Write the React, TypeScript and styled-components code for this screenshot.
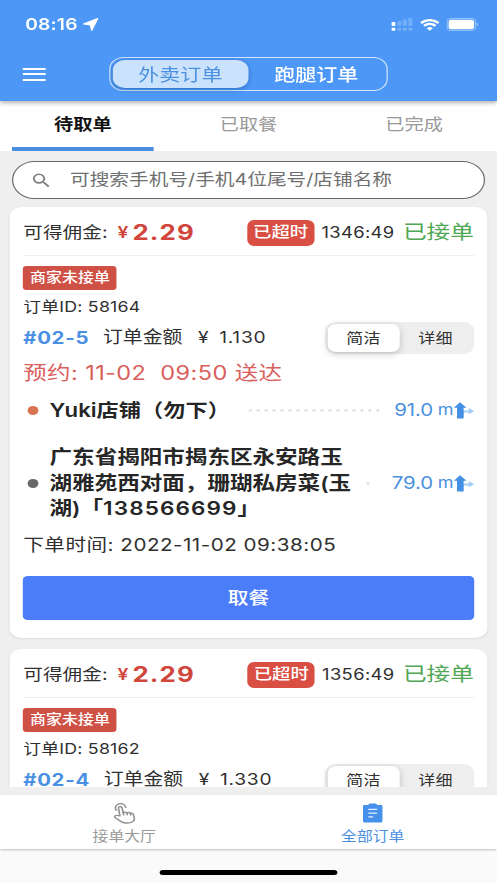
import React from 'react';
import styled, { createGlobalStyle } from 'styled-components';
import { MdSearch } from 'react-icons/md';

const GlobalStyle = createGlobalStyle`
  * { box-sizing: border-box; }
  body { margin: 0; overflow: hidden; background: #efefef; }
`;

const Viewport = styled.div`
  width: 497px;
  height: 883px;
  overflow: hidden;
`;

/* A 414pt wide phone layout, stretched to the width of the viewport. */
const Screen = styled.div`
  width: 414px;
  height: 883px;
  transform: scaleX(1.2005);
  transform-origin: 0 0;
  display: flex;
  flex-direction: column;
  background: #efefef;
  color: #303030;
  font-family: Inter, 'Noto Sans CJK SC', sans-serif;
`;

const Text = styled.span<{ $size: number; $color?: string; $weight?: number; $ls?: number; $ml?: number }>`
  font-size: ${p => p.$size}px;
  line-height: 1.2;
  color: ${p => p.$color ?? '#303030'};
  font-weight: ${p => p.$weight ?? 400};
  letter-spacing: ${p => p.$ls ?? 0}px;
  margin-left: ${p => p.$ml ?? 0}px;
  white-space: pre;
`;

const Header = styled.header`
  height: 101px;
  flex: none;
  background: #4d98f6;
  box-shadow: 0 2px 4px rgba(0, 0, 0, 0.3);
  position: relative;
  z-index: 1;
`;

const StatusBar = styled.div`
  height: 48px;
  padding: 1px 15px 0 21px;
  display: flex;
  align-items: center;
`;

const StatusIcons = styled.div`
  margin-left: auto;
  display: flex;
  align-items: center;
  gap: 6px;
`;

const NavBar = styled.div`
  height: 53px;
  padding-left: 19px;
  display: flex;
  align-items: center;
  padding-bottom: 1px;
`;

const MenuButton = styled.button`
  width: 22px;
  height: 13px;
  padding: 0;
  border: 0;
  background: none;
  display: flex;
  flex-direction: column;
  justify-content: space-between;
`;

const MenuLine = styled.span`
  width: 18.5px;
  height: 2px;
  background: #fff;
`;

const TypeSwitch = styled.div`
  width: 232.5px;
  height: 34px;
  margin-left: 49.5px;
  border: 1px solid #d3e6fd;
  border-radius: 12px;
  padding: 2px;
  display: flex;
`;

const TypeOption = styled.div<{ $active?: boolean }>`
  flex: ${p => (p.$active ? '0 0 113.5px' : '1')};
  display: flex;
  align-items: center;
  justify-content: center;
  border-radius: 10px;
  background: ${p => (p.$active ? '#cbe2fc' : 'transparent')};
  box-shadow: ${p => (p.$active ? '0 1px 5px rgba(0, 30, 90, .35)' : 'none')};
`;

const Tabs = styled.nav`
  height: 50px;
  flex: none;
  background: #fff;
  display: flex;
`;

const Tab = styled.div<{ $active?: boolean }>`
  flex: 1;
  margin: 0 10px;
  padding-top: 2px;
  display: flex;
  align-items: center;
  justify-content: center;
  border-bottom: 4px solid ${p => (p.$active ? '#4a8ee2' : 'transparent')};
`;

const List = styled.main`
  height: 636px;
  flex: none;
  overflow: hidden;
  padding: 10px 8.3px 0;
`;

const SearchBox = styled.div`
  height: 38px;
  margin: 0 2px 8px;
  border: 1px solid #6a6a6a;
  border-radius: 19px;
  background: #fff;
  display: flex;
  align-items: center;
  padding-left: 14px;
`;

const Card = styled.section`
  height: 431px;
  margin-bottom: 11px;
  padding: 0 11px;
  border-radius: 10px;
  background: #fff;
  box-shadow: 0 1px 2px rgba(0, 0, 0, 0.08);
`;

const Row = styled.div<{ $h: number }>`
  height: ${p => p.$h}px;
  display: flex;
  align-items: center;
`;

const CardHead = styled(Row)`
  padding-top: 3px;
  border-bottom: 1px solid #efefef;
`;

const IdRow = styled(Row)`
  padding-top: 3px;
`;

const ScheduleRow = styled(Row)`
  padding-top: 4px;
`;

const TimeRow = styled(Row)`
  margin-bottom: 21px;
`;

const Right = styled.div`
  margin-left: auto;
  display: flex;
  align-items: center;
`;

const Overdue = styled.span`
  width: 56px;
  height: 26px;
  border-radius: 6px;
  background: #da4f43;
  display: flex;
  align-items: center;
  justify-content: center;
  margin-right: 6px;
`;

const Timer = styled(Text)`
  padding-top: 2px;
`;

const ShopTag = styled.div`
  width: 78px;
  height: 24px;
  margin-top: 10px;
  border-radius: 3px;
  background: #cf5145;
  display: flex;
  align-items: center;
  justify-content: center;
`;

const ModeSwitch = styled.div`
  margin-left: auto;
  width: 124px;
  height: 32px;
  padding: 2px;
  border-radius: 9px;
  background: #eeeeee;
  display: flex;
`;

const Mode = styled.div<{ $active?: boolean }>`
  flex: 1;
  display: flex;
  align-items: center;
  justify-content: center;
  border-radius: 7px;
  background: ${p => (p.$active ? '#fff' : 'transparent')};
  box-shadow: ${p => (p.$active ? '0 2px 7px rgba(0, 0, 0, .2)' : 'none')};
`;

const Dot = styled.span<{ $color: string }>`
  width: 9px;
  height: 9px;
  margin: 0 9px 0 4px;
  border-radius: 50%;
  background: ${p => p.$color};
  flex: none;
`;

const DottedLine = styled.span<{ $w: number; $mr: number }>`
  margin-left: auto;
  margin-right: ${p => p.$mr}px;
  width: ${p => p.$w}px;
  height: 3px;
  background: radial-gradient(circle at 1.5px 1.5px, #e4e4e4 1.3px, transparent 1.7px) 0 0 / 6.65px 3px repeat-x;
`;

const Address = styled.div`
  width: 262px;
  padding-top: 1px;
  font-size: 18.8px;
  line-height: 25.6px;
  font-weight: 600;
  color: #262626;
  white-space: pre;
`;

const Digits = styled.span`
  letter-spacing: 0.9px;
`;

const PickButton = styled.button`
  width: 100%;
  height: 44px;
  border: 0;
  border-radius: 4px;
  background: #4b7df8;
  display: flex;
  align-items: center;
  justify-content: center;
  padding: 0;
  font-family: inherit;
`;

const ListEdge = styled.div`
  height: 8px;
  flex: none;
  background: #efefef;
`;

const BottomBar = styled.footer`
  height: 54px;
  flex: none;
  background: #fff;
  display: flex;
  position: relative;
  box-shadow: 0 1px 2px rgba(0, 0, 0, 0.25);
`;

const BottomItem = styled.div`
  flex: 1;
  display: flex;
  flex-direction: column;
  align-items: center;
  justify-content: space-between;
  padding: 8px 0 4px;
`;

const HomeArea = styled.div`
  flex: 1;
  background: #fafafa;
  display: flex;
  justify-content: center;
  padding-top: 21px;
`;

const HomeIndicator = styled.div`
  width: 148px;
  height: 5px;
  border-radius: 3px;
  background: #000;
`;

const LocationArrow = () => (
  <svg width="13" height="13" viewBox="0 0 13 13">
    <path d="M12.4.6 7.4 12.3 6.3 6.9.6 6Z" fill="#fff" stroke="#fff" strokeWidth="1.1" strokeLinejoin="round" />
  </svg>
);

const Signal = () => (
  <svg width="18" height="13" viewBox="0 0 18 13">
    {[0, 5, 9.6, 14.2].map((x, i) => (
      <g key={x} fill="#fff" opacity={i ? 0.22 : 1}>
        <rect x={x} y={[4, 3, 1.5, 0][i]} width="3.3" height={[4, 5, 6.5, 8][i]} rx=".7" />
        <rect x={x} y="9.8" width="3.3" height="3" rx=".7" />
      </g>
    ))}
  </svg>
);

const Wifi = () => (
  <svg width="16" height="12" viewBox="0 0 16 12" fill="none" stroke="#fff">
    <path d="M.7 4.1a10.4 10.4 0 0 1 14.6 0" strokeWidth="2.3" />
    <path d="M3.2 6.9a6.8 6.8 0 0 1 9.6 0" strokeWidth="2.2" />
    <path d="M8 11.8 5.4 9.2a3.8 3.8 0 0 1 5.2 0Z" fill="#fff" stroke="none" />
  </svg>
);

const Battery = () => (
  <svg width="27" height="13" viewBox="0 0 27 13">
    <rect x=".5" y=".5" width="23.5" height="12" rx="3" fill="none" stroke="#fff" opacity=".4" />
    <rect x="1.7" y="1.8" width="21.1" height="9.4" rx="2" fill="#fff" />
    <path d="M25.1 4.5v4c1.5-.6 1.5-3.4 0-4Z" fill="#fff" opacity=".5" />
  </svg>
);

const TapIcon = () => (
  <svg width="19" height="21" viewBox="0 0 19 21" fill="none" stroke="#929292" strokeWidth="1.4" strokeLinecap="round" strokeLinejoin="round">
    <path d="M2.8 7.2A4.3 4.3 0 1 1 10.7 4.4" />
    <path d="M5.9 12.8 4.7 5.3a1.45 1.45 0 0 1 2.9-.5l1 4.7 1-.3c.8-.2 1.5 0 1.9.5l1.3-.2c.7-.1 1.4.2 1.7.8l1-.1c1 0 1.5.6 1.7 1.5l.7 3.2c.3 2.3-1 4.1-3.2 4.7-3 .8-5.7.5-7.8-1L2.1 14.800c-1.200-1.300-.1-2.700 1.300-2.400Z" />
    <path d="m8.600 9.500.5 2.300M11.500 9.700l.5 2M14.500 10.300l.4 1.700" />
  </svg>
);

const OrdersIcon = () => (
  <svg width="17" height="20" viewBox="0 0 17 20">
    <path d="M1.5 2H4.7Q5.2.6 6.4.6H10.4Q11.7.6 12.2 2H15.5Q16.6 2 16.6 3.2V18Q16.6 19.4 15.5 19.4H1.5Q.4 19.4.4 18V3.2Q.4 2 1.5 2Z" fill="#4590ea" />
    <path d="M4.8 6.4H12.2M4.8 10.2H12.2M4.8 13.9H8.8" stroke="#e4f0fd" strokeWidth="1.2" />
  </svg>
);

const RouteIcon = () => (
  <svg width="17" height="17" viewBox="0 0 17 17">
    <path d="M7 14.5V11.4Q7 9.5 9.5 9.5H13" fill="none" stroke="#a6cdf6" strokeWidth="2.2" />
    <path d="M12.5 6 17 9.2 12.5 12.3Z" fill="#a6cdf6" />
    <path d="M5.2.2 10.6 5.8H8.2V16.6H2.7V5.8H0Z" fill="#4590e4" />
  </svg>
);

const Distance = ({ value }: { value: string }) => (
  <>
    <Text $size={17} $color="#4a91df" $ls={-0.15}>{value}</Text>
    <Text $size={15} $color="#4a91df" $ml={4}>m</Text>
    <RouteIcon />
  </>
);

interface Order {
  id: string;
  no: string;
  commission: string;
  amount: string;
  timer: string;
}

const OrderCard = ({ id, no, commission, amount, timer }: Order) => (
  <Card>
    <CardHead $h={49}>
      <Text $size={16.3} $ls={0.15}>可得佣金:</Text>
      <Text $size={16} $weight={600} $color="#d0463c" $ml={8}>¥</Text>
      <Text $size={21.5} $weight={700} $color="#d0463c" $ml={3.5} $ls={0.9}>{commission}</Text>
      <Right>
        <Overdue><Text $size={15.3} $color="#fff" $weight={500}>已超时</Text></Overdue>
        <Timer $size={15.3} $ls={0.3}>{timer}</Timer>
        <Text $size={19.7} $color="#50a754" $ml={7}>已接单</Text>
      </Right>
    </CardHead>
    <ShopTag><Text $size={13.3} $color="#fff" $weight={500}>商家未接单</Text></ShopTag>
    <IdRow $h={32}><Text $size={14.8} $ls={0.2}>{`订单ID: ${id}`}</Text></IdRow>
    <Row $h={32}>
      <Text $size={17} $weight={700} $color="#4a90e2" $ls={0.6}>{no}</Text>
      <Text $size={16.5} $ml={11.5}>订单金额</Text>
      <Text $size={16} $ml={13}>¥</Text>
      <Text $size={16} $ml={9} $ls={0.6}>{amount}</Text>
      <ModeSwitch>
        <Mode $active><Text $size={14.2}>简洁</Text></Mode>
        <Mode><Text $size={14.2}>详细</Text></Mode>
      </ModeSwitch>
    </Row>
    <ScheduleRow $h={36}><Text $size={19.6} $color="#d9605c" $ls={0.33}>预约: 11-02  09:50 送达</Text></ScheduleRow>
    <Row $h={40}>
      <Dot $color="#d97452" />
      <Text $size={18.5} $weight={600} $color="#262626">Yuki店铺（勿下）</Text>
      <DottedLine $w={112} $mr={10} />
      <Distance value="91.0" />
    </Row>
    <Row $h={106}>
      <Dot $color="#686868" />
      <Address>
        广东省揭阳市揭东区永安路玉<br />
        湖雅苑西对面，珊瑚私房菜(玉<br />
        湖)「<Digits>138566699</Digits>」
      </Address>
      <DottedLine $w={3} $mr={18} />
      <Distance value="79.0" />
    </Row>
    <TimeRow $h={19}><Text $size={17.2} $ls={0.4}>下单时间: 2022-11-02 09:38:05</Text></TimeRow>
    <PickButton><Text $size={17.3} $color="#fff" $weight={500}>取餐</Text></PickButton>
  </Card>
);

export default function App() {
  return (
    <Viewport>
      <GlobalStyle />
      <Screen>
        <Header>
          <StatusBar>
            <Text $size={16} $weight={600} $color="#fff" $ls={0.15}>08:16&nbsp;</Text>
            <LocationArrow />
            <StatusIcons><Signal /><Wifi /><Battery /></StatusIcons>
          </StatusBar>
          <NavBar>
            <MenuButton aria-label="菜单"><MenuLine /><MenuLine /><MenuLine /></MenuButton>
            <TypeSwitch>
              <TypeOption $active><Text $size={17.5} $color="#4b91df">外卖订单</Text></TypeOption>
              <TypeOption><Text $size={17.5} $color="#fff" $weight={500}>跑腿订单</Text></TypeOption>
            </TypeSwitch>
          </NavBar>
        </Header>
        <Tabs>
          <Tab $active><Text $size={16} $weight={700} $color="#111">待取单</Text></Tab>
          <Tab><Text $size={16} $color="#999">已取餐</Text></Tab>
          <Tab><Text $size={16} $color="#999">已完成</Text></Tab>
        </Tabs>
        <List>
          <SearchBox>
            <MdSearch size={19} color="#808080" />
            <Text $size={16.4} $color="#707070" $ml={14}>可搜索手机号/手机4位尾号/店铺名称</Text>
          </SearchBox>
          <OrderCard id="58164" no="#02-5" commission="2.29" amount="1.130" timer="1346:49" />
          <OrderCard id="58162" no="#02-4" commission="2.29" amount="1.330" timer="1356:49" />
        </List>
        <ListEdge />
        <BottomBar>
          <BottomItem>
            <TapIcon />
            <Text $size={13.2} $color="#999">接单大厅</Text>
          </BottomItem>
          <BottomItem>
            <OrdersIcon />
            <Text $size={13.2} $color="#4a90df">全部订单</Text>
          </BottomItem>
        </BottomBar>
        <HomeArea><HomeIndicator /></HomeArea>
      </Screen>
    </Viewport>
  );
}
